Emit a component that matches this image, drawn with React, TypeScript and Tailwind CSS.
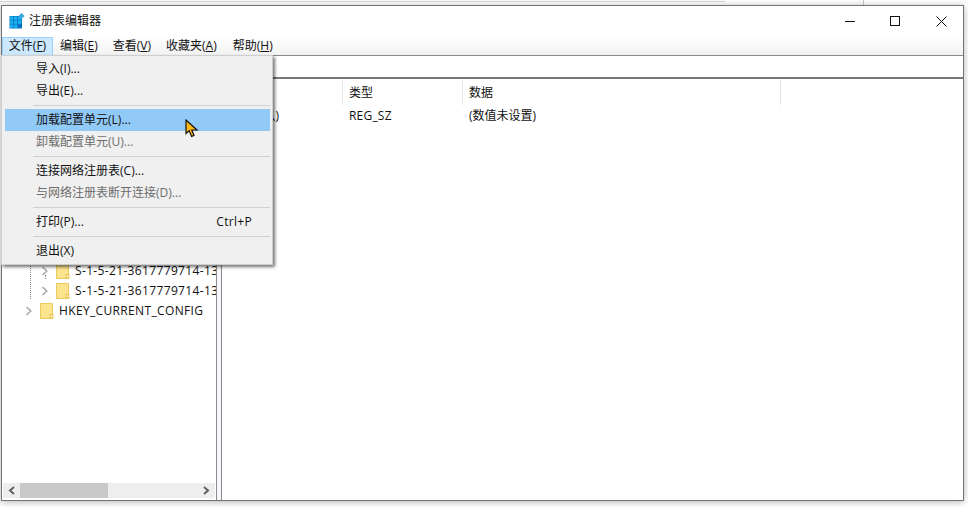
import React from "react";

const menuBarItems = [
  { label: "编辑", key: "E", left: "ml-[7px]" },
  { label: "查看", key: "V", left: "ml-[15px]" },
  { label: "收藏夹", key: "A", left: "ml-[15px]" },
  { label: "帮助", key: "H", left: "ml-[16px]" },
];

const Folder = () => (
  <svg width="14" height="16" viewBox="0 0 14 16" className="shrink-0">
    <path d="M0.5 0.5H12.5V15.5H0.5Z" fill="#fce48f" stroke="#eccb5f" />
    <path d="M10 15V11.5H13V15Z" fill="#fff3bf" stroke="#e5bd45" strokeWidth="1" />
  </svg>
);

const Chevron = () => (
  <svg width="8" height="10" viewBox="0 0 8 10" className="shrink-0">
    <path d="M1.5 1L5.8 5L1.5 9" fill="none" stroke="#a6a6a6" strokeWidth="1.5" />
  </svg>
);

const TreeRow = ({ text, indent }: { text: string; indent: string }) => (
  <div className={`flex items-center h-[20px] ${indent}`}>
    <Chevron />
    <div className="ml-[7px]">
      <Folder />
    </div>
    <span className="ml-[5px] whitespace-nowrap text-[12px] tracking-[0.35px] text-[#111]">{text}</span>
  </div>
);

const MenuItem = ({
  label,
  hotkey,
  suffix = "...",
  disabled,
  active,
  shortcut,
}: {
  label: string;
  hotkey: string;
  suffix?: string;
  disabled?: boolean;
  active?: boolean;
  shortcut?: string;
}) => (
  <div
    className={`flex items-center justify-between h-[22px] ml-[3px] mr-[2px] pl-[31px] pr-[18px] text-[12px] ${
      active ? "bg-[#91c9f7]" : ""
    } ${disabled ? "text-[#6d6d6d]" : "text-[#111]"}`}
  >
    <span>
      {label}({hotkey}){suffix}
    </span>
    {shortcut && <span className="tracking-[0.3px]">{shortcut}</span>}
  </div>
);

const MenuSep = ({ h }: { h: string }) => (
  <div className={`flex items-center ml-[31px] mr-[2px] ${h}`}>
    <div className="w-full h-px bg-[#d0d0d0]" />
  </div>
);

export default function App() {
  return (
    <div
      className="relative w-[968px] h-[507px] overflow-hidden bg-white pt-[5px] pl-[1px] pr-[4px] pb-[6px]"
      style={{ fontFamily: '"Open Sans", "Noto Sans CJK SC", sans-serif' }}
    >
      {/* stuff peeking out behind the window */}
      <div className="absolute left-0 top-[1px] w-[725px] h-px bg-[#d8d8d8]" />
      <div className="absolute left-[863px] top-0 w-px h-[5px] bg-[#c8c8c8]" />

      <div className="relative flex flex-col h-[496px] border-[1.5px] border-[#737373] bg-white shadow-[0_1px_7px_rgba(0,0,0,0.3)]">
        {/* title bar */}
        <div className="flex items-center h-[30px] shrink-0">
          <svg width="16" height="16" viewBox="0 0 16 16" className="ml-[7px] shrink-0">
            <rect x="0.5" y="3" width="12.5" height="12.5" fill="#0b6fc2" />
            <g fill="#1ab2ee">
              <rect x="1" y="3.5" width="3.3" height="3.3" />
              <rect x="5" y="3.5" width="3.3" height="3.3" />
              <rect x="9" y="3.5" width="3.5" height="3.3" />
              <rect x="1" y="7.5" width="3.3" height="3.3" />
              <rect x="5" y="7.5" width="3.3" height="3.3" />
              <rect x="9" y="7.5" width="3.5" height="3.3" />
              <rect x="1" y="11.5" width="3.3" height="3.5" />
              <rect x="5" y="11.5" width="3.3" height="3.5" />
            </g>
            <path d="M12.5 0L15.5 3L12.5 6L9.5 3Z" fill="#3fa6dc" />
          </svg>
          <span className="ml-[4px] text-[12px] text-[#111]">注册表编辑器</span>
          <div className="ml-auto flex items-center">
            <svg width="11" height="11" viewBox="0 0 11 11" className="mr-[34px]">
              <path d="M0 5.5H10" stroke="#111" strokeWidth="1" />
            </svg>
            <svg width="11" height="11" viewBox="0 0 11 11" className="mr-[35px]">
              <rect x="0.5" y="0.5" width="9" height="9" fill="none" stroke="#111" />
            </svg>
            <svg width="11" height="11" viewBox="0 0 11 11" className="mr-[16px]">
              <path d="M0.5 0.5L10.5 10.5M10.5 0.5L0.5 10.5" stroke="#111" strokeWidth="1" />
            </svg>
          </div>
        </div>

        {/* menu bar */}
        <div className="flex items-center h-[19px] shrink-0 pt-px text-[12px] text-[#111] bg-gradient-to-b from-white to-[#f2f2f2]">
          <div className="flex items-center h-[19px] w-[51px] justify-center border border-[#99d1ff] bg-[#cce8ff]">
            文件(<span className="underline">F</span>)
          </div>
          {menuBarItems.map((item) => (
            <div key={item.key} className={item.left}>
              {item.label}(<span className="underline">{item.key}</span>)
            </div>
          ))}
        </div>

        {/* address bar */}
        <div className="h-[24px] shrink-0 border-t-[1.5px] border-b-2 border-t-[#8a8a8a] border-b-[#787878] bg-white" />

        {/* panes */}
        <div className="flex flex-1 min-h-0">
          <div className="flex flex-col w-[215px] shrink-0 border-r-[1.5px] border-[#8b8b93]">
            <div className="flex-1 min-h-0 overflow-hidden pt-[182px] relative">
              <div className="absolute left-[28px] top-[180px] h-[40px] border-l border-dotted border-[#888]" />
              <div className="absolute left-[43px] top-[196px] h-[4px] border-l border-dotted border-[#888]" />
              <TreeRow text="S-1-5-21-3617779714-1352440040" indent="pl-[39px]" />
              <TreeRow text="S-1-5-21-3617779714-1352440040" indent="pl-[39px]" />
              <TreeRow text="HKEY_CURRENT_CONFIG" indent="pl-[23px]" />
            </div>
            <div className="flex items-center justify-between h-[15px] shrink-0 mx-[1px] mb-[2px] bg-[#eeeeee] pl-[5px] pr-[5px]">
              <svg width="8" height="9" viewBox="0 0 8 9">
                <path d="M6 1L2 4.5L6 8" fill="none" stroke="#606060" strokeWidth="2" />
              </svg>
              <div className="h-full w-[88px] bg-[#c9c9c9] mr-auto ml-[4px]" />
              <svg width="8" height="9" viewBox="0 0 8 9">
                <path d="M2 1L6 4.5L2 8" fill="none" stroke="#606060" strokeWidth="2" />
              </svg>
            </div>
          </div>
          <div className="w-[4px] shrink-0 bg-[#f7f7f7]" />
          <div className="flex-1 min-w-0 border-l-[1.5px] border-[#8b8b93] text-[12px] text-[#111]">
            <div className="flex h-[26px] items-stretch pt-[1px]">
              <div className="w-[120px] shrink-0" />
              <div className="flex items-center w-[120px] shrink-0 pl-[6px] border-l border-[#e5e5e5]">类型</div>
              <div className="flex items-center w-[318px] shrink-0 pl-[6px] border-l border-[#e5e5e5]">数据</div>
              <div className="border-l border-[#e5e5e5]" />
            </div>
            <div className="flex h-[22px] items-center">
              <div className="w-[121px] shrink-0 pl-[26px]">(默认)</div>
              <div className="w-[120px] shrink-0 pl-[6px] tracking-[0.2px]">REG_SZ</div>
              <div className="pl-[6px]">(数值未设置)</div>
            </div>
          </div>
        </div>
      </div>

      {/* open file menu */}
      <div className="absolute left-[1px] top-[55px] w-[272px] h-[210px] pt-[2px] border border-[#cfcfcf] bg-[#f0f0f0] shadow-[2px_2px_3px_rgba(0,0,0,0.55)]">
        <MenuItem label="导入" hotkey="I" />
        <MenuItem label="导出" hotkey="E" />
        <MenuSep h="h-[7px]" />
        <MenuItem label="加载配置单元" hotkey="L" active />
        <MenuItem label="卸载配置单元" hotkey="U" disabled />
        <MenuSep h="h-[7px]" />
        <MenuItem label="连接网络注册表" hotkey="C" />
        <MenuItem label="与网络注册表断开连接" hotkey="D" disabled />
        <MenuSep h="h-[7px]" />
        <MenuItem label="打印" hotkey="P" shortcut="Ctrl+P" />
        <MenuSep h="h-[7px]" />
        <MenuItem label="退出" hotkey="X" suffix="" />
      </div>

      {/* mouse pointer */}
      <svg width="14" height="19" viewBox="0 0 14 19" className="absolute left-[185px] top-[119px]">
        <path
          d="M1 1V14.5L4.2 11.8L6.6 17.5L9 16.4L6.8 11H12Z"
          fill="#fdb813"
          stroke="#111"
          strokeWidth="1.2"
        />
      </svg>
    </div>
  );
}
